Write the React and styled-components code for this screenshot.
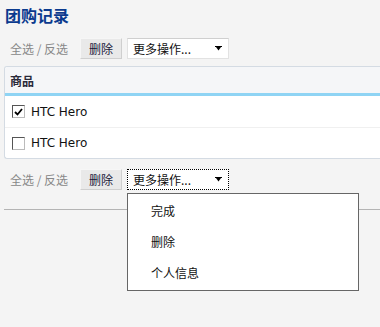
import React from "react";
import styled, { createGlobalStyle } from "styled-components";

const Global = createGlobalStyle`
  html, body { margin: 0; padding: 0; background: #f4f4f4; height: 100%; }
  body { font-family: "DejaVu Sans", "Noto Sans CJK SC", sans-serif; font-size: 12px; color: #222; }
  #root { min-height: 100%; }
`;

const Page = styled.div`
  padding: 4px 0 0 4px;
  min-height: 327px;
  box-sizing: border-box;
`;

const Title = styled.h1`
  margin: 0 0 0 1px;
  font-size: 16px;
  line-height: 22px;
  font-weight: bold;
  color: #0b3a8e;
  font-family: "Noto Sans CJK SC", sans-serif;
`;

const Toolbar = styled.div`
  position: relative;
  display: flex;
  align-items: center;
  height: 21px;
  margin-top: ${(p) => p.$top}px;
  padding-left: 6px;
`;

const SelectLinks = styled.span`
  color: #888;
  font-family: "Noto Sans CJK SC", sans-serif;
  width: 58px;
  margin-right: 12px;
  white-space: nowrap;
`;

const Button = styled.button`
  height: 21px;
  width: 42px;
  padding: 0;
  margin-right: 5px;
  background: #e9e9e9;
  border: 1px solid #f6f6f6;
  border-right-color: #cfcfcf;
  border-bottom-color: #cfcfcf;
  font-family: "Noto Sans CJK SC", sans-serif;
  font-size: 12px;
  color: #1a1a3a;
`;

const Select = styled.div`
  box-sizing: border-box;
  width: 102px;
  height: 21px;
  background: #fff;
  display: flex;
  align-items: center;
  justify-content: space-between;
  padding: 0 6px 0 5px;
  border: 1px solid ${(p) => (p.$focus ? "transparent" : "#e2e2e2")};
  border-top-color: ${(p) => (p.$focus ? "transparent" : "#cfcfcf")};
  outline: ${(p) => (p.$focus ? "1px dotted #000" : "none")};
  outline-offset: -1px;
  color: #111;
  font-family: "Noto Sans CJK SC", sans-serif;
`;

const Arrow = () => (
  <svg width="7" height="5" viewBox="0 0 7 5">
    <rect x="0" y="0" width="7" height="1" fill="#000" />
    <polygon points="1,1 6,1 3.5,4.5" fill="#000" />
  </svg>
);

const Table = styled.div`
  margin-top: 7px;
  background: #fff;
  border: 1px solid #d4dbe3;
  border-right: none;
  border-radius: 3px 0 0 3px;
  overflow: hidden;
`;

const Header = styled.div`
  height: 26px;
  display: flex;
  align-items: center;
  padding-left: 5px;
  background: #f5f6f8;
  border-bottom: 3px solid #8fd4f4;
  font-weight: bold;
  color: #2a2a3a;
  font-family: "Noto Sans CJK SC", sans-serif;
  font-size: 12px;
`;

const Row = styled.div`
  height: ${(p) => (p.$first ? 31 : 30)}px;
  display: flex;
  align-items: center;
  padding-left: 7px;
  border-top: ${(p) => (p.$first ? "none" : "1px solid #f0f0f0")};
  font-size: 12px;
  color: #111;
`;

const Check = styled.span`
  box-sizing: border-box;
  width: 13px;
  height: 13px;
  border: 1px solid #555;
  border-right-color: #bbb;
  border-bottom-color: #bbb;
  background: #fff;
  margin-right: 6px;
  display: inline-flex;
  align-items: center;
  justify-content: center;
`;

const Rule = styled.div`
  margin-top: 19px;
  border-top: 1px solid #b4b4b4;
`;

const Menu = styled.div`
  position: absolute;
  left: 123px;
  top: 24px;
  width: 230px;
  background: #fff;
  border: 1px solid #666;
  padding: 1px 0 2px;
  z-index: 5;
`;

const MenuItem = styled.div`
  height: 31px;
  line-height: 31px;
  padding-left: 23px;
  font-family: "Noto Sans CJK SC", sans-serif;
  font-size: 12px;
  color: #111;
`;

const ToolbarContent = ({ focus, children }) => (
  <>
    <SelectLinks>全选 / 反选</SelectLinks>
    <Button>删除</Button>
    <Select $focus={focus}>
      <span>更多操作...</span>
      <Arrow />
    </Select>
    {children}
  </>
);

export default function App() {
  return (
    <>
      <Global />
      <Page>
        <Title>团购记录</Title>
        <Toolbar $top={12}>
          <ToolbarContent />
        </Toolbar>
        <Table>
          <Header>商品</Header>
          <Row $first>
            <Check>
              <svg width="9" height="8" viewBox="0 0 9 8">
                <path d="M1 4 L3.5 6.5 L8 1" stroke="#000" strokeWidth="1.8" fill="none" />
              </svg>
            </Check>
            HTC Hero
          </Row>
          <Row>
            <Check />
            HTC Hero
          </Row>
        </Table>
        <Toolbar $top={10}>
          <ToolbarContent focus>
            <Menu>
              <MenuItem>完成</MenuItem>
              <MenuItem>删除</MenuItem>
              <MenuItem>个人信息</MenuItem>
            </Menu>
          </ToolbarContent>
        </Toolbar>
        <Rule />
      </Page>
    </>
  );
}
